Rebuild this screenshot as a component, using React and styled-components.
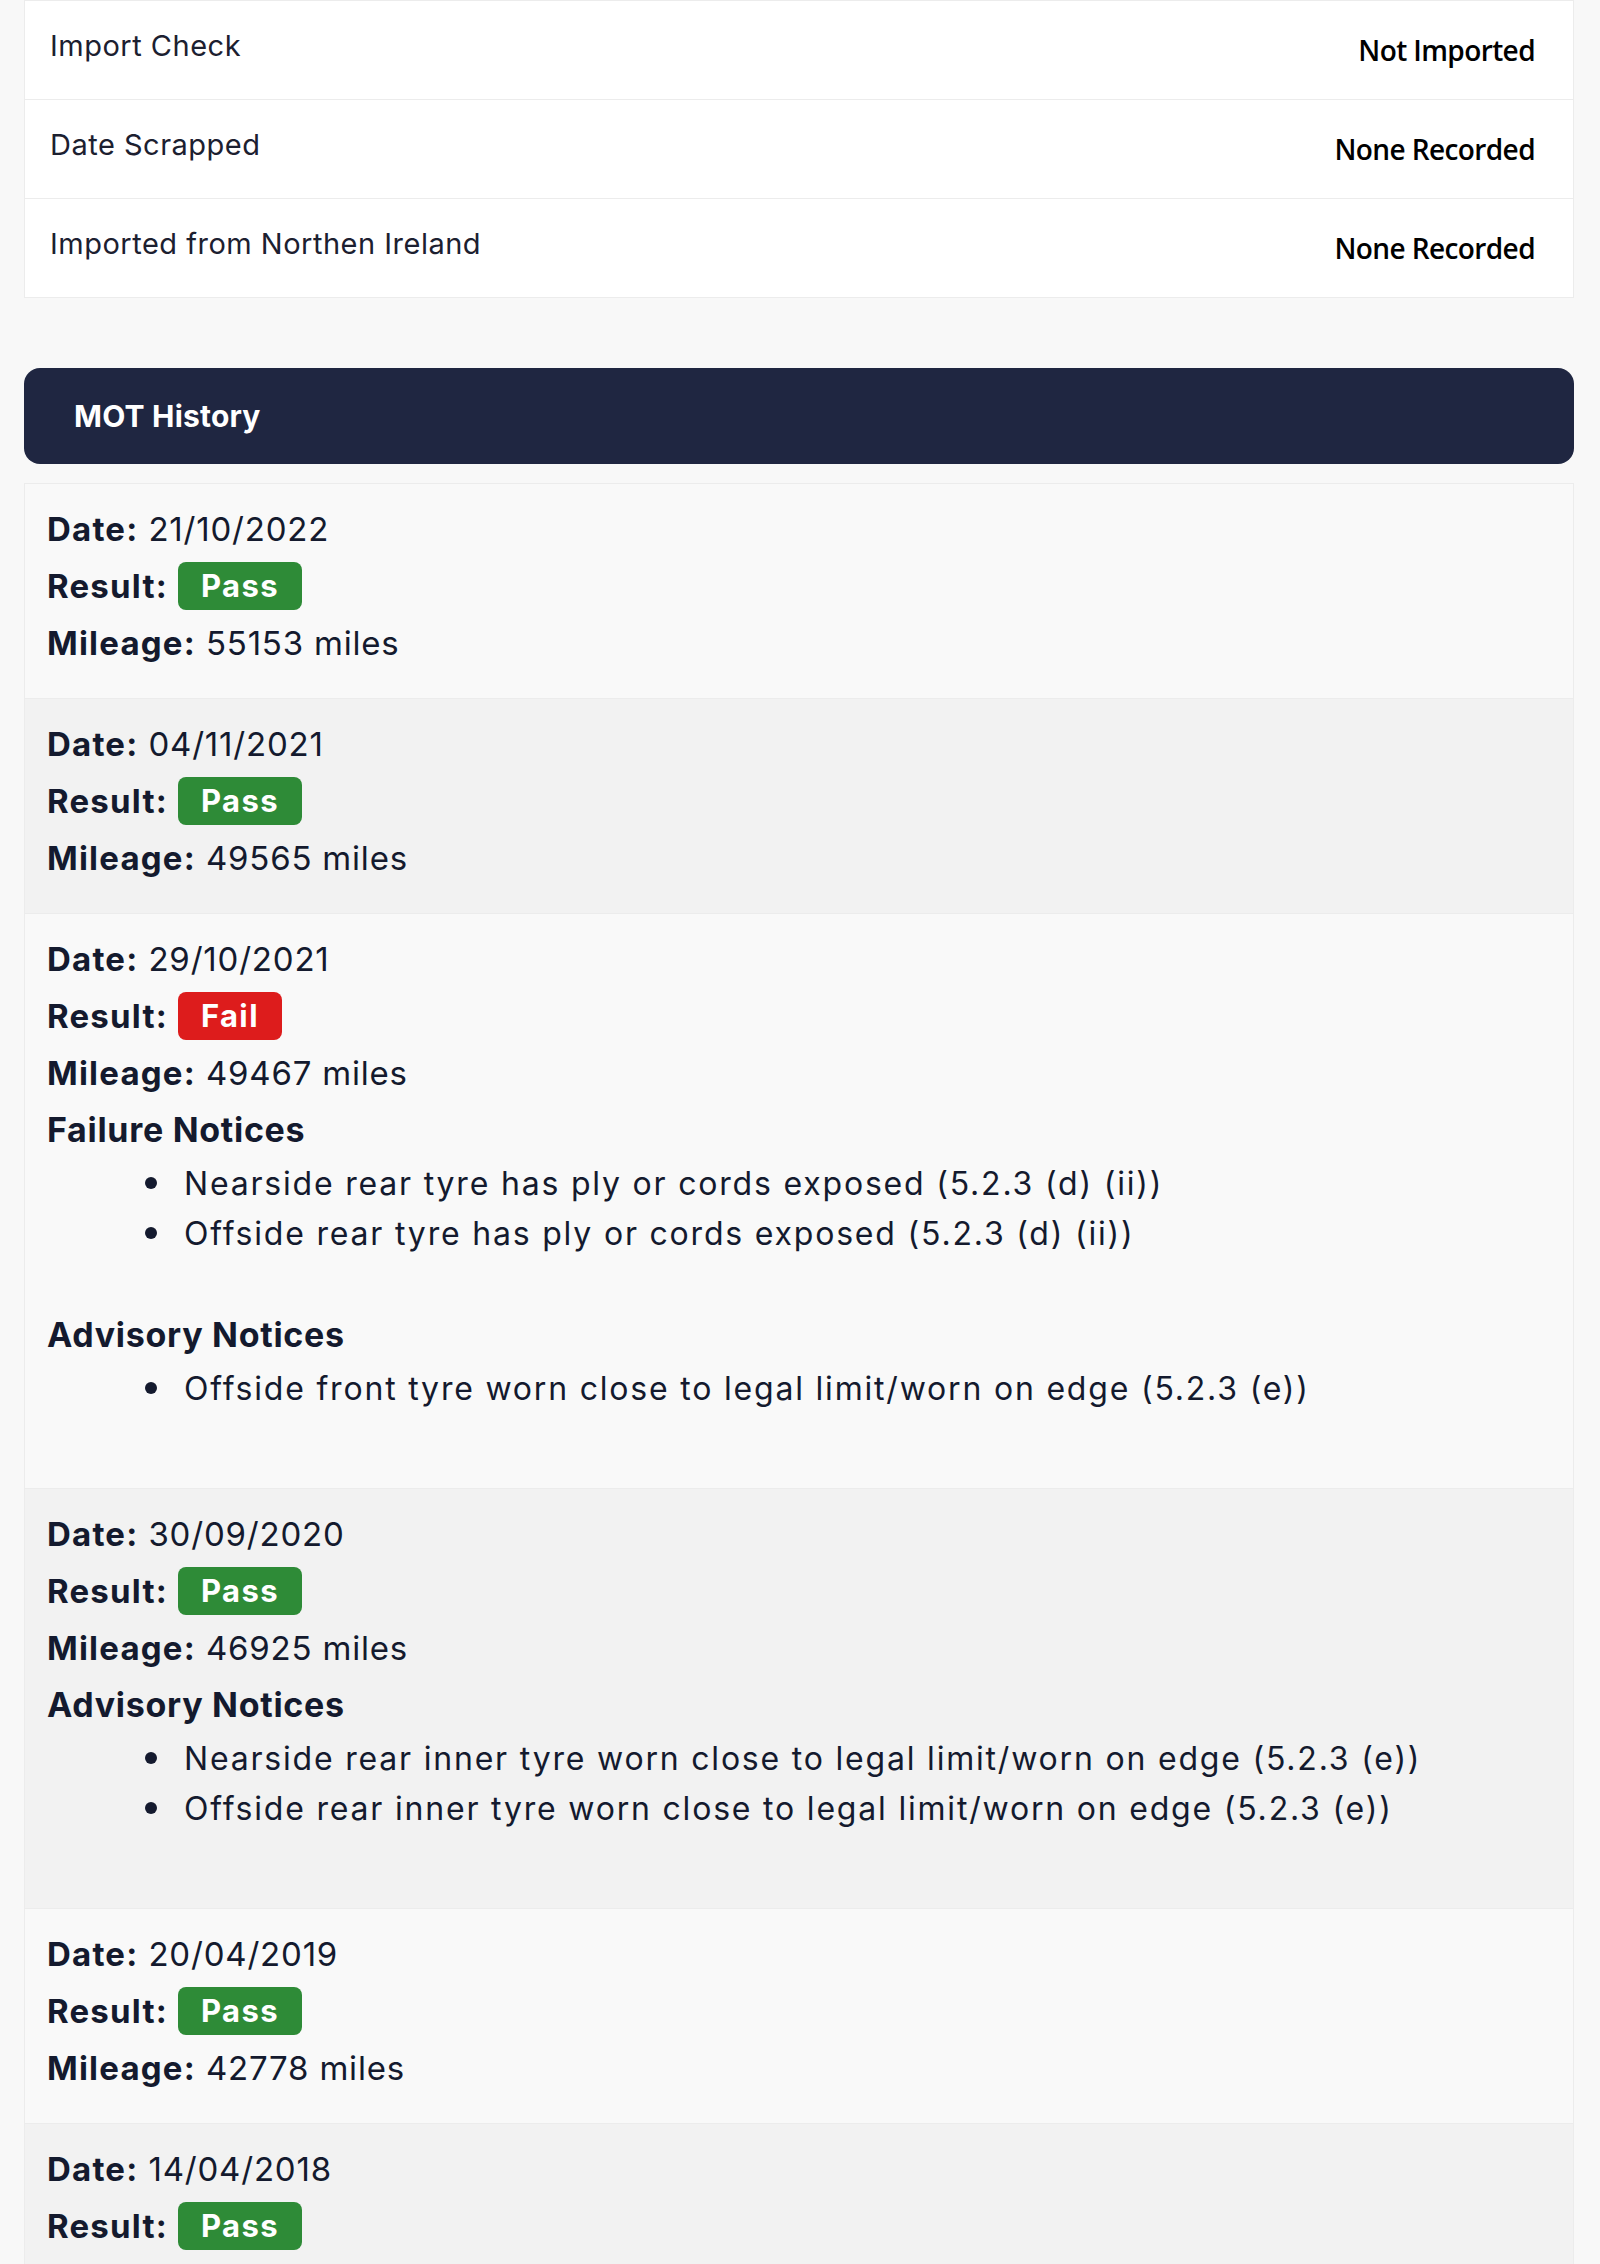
import React from "react";
import styled, { createGlobalStyle } from "styled-components";

const checks = [
  { label: "Import Check", value: "Not Imported" },
  { label: "Date Scrapped", value: "None Recorded" },
  { label: "Imported from Northen Ireland", value: "None Recorded" },
];

const tests = [
  { date: "21/10/2022", result: "Pass", mileage: 55153 },
  { date: "04/11/2021", result: "Pass", mileage: 49565 },
  {
    date: "29/10/2021",
    result: "Fail",
    mileage: 49467,
    failures: [
      "Nearside rear tyre has ply or cords exposed (5.2.3 (d) (ii))",
      "Offside rear tyre has ply or cords exposed (5.2.3 (d) (ii))",
    ],
    advisories: [
      "Offside front tyre worn close to legal limit/worn on edge (5.2.3 (e))",
    ],
  },
  {
    date: "30/09/2020",
    result: "Pass",
    mileage: 46925,
    advisories: [
      "Nearside rear inner tyre worn close to legal limit/worn on edge (5.2.3 (e))",
      "Offside rear inner tyre worn close to legal limit/worn on edge (5.2.3 (e))",
    ],
  },
  { date: "20/04/2019", result: "Pass", mileage: 42778 },
  { date: "14/04/2018", result: "Pass" },
];

const Notices = ({ title, items }) => (
  <>
    <Heading>{title}</Heading>
    <NoticeList>
      {items.map((item) => (
        <NoticeItem key={item}>
          <Dot />
          <span>{item}</span>
        </NoticeItem>
      ))}
    </NoticeList>
  </>
);

const App = () => {
  return (
    <Page>
      <GlobalStyle />
      <CheckCard>
        {checks.map((row) => (
          <CheckRow key={row.label}>
            <CheckLabel>{row.label}</CheckLabel>
            <CheckValue>{row.value}</CheckValue>
          </CheckRow>
        ))}
      </CheckCard>

      <SectionHeader>MOT History</SectionHeader>

      <TestList>
        {tests.map((test, i) => (
          <TestEntry key={test.date} $shaded={i % 2 === 1}>
            <Line>
              <Label>Date:</Label> {test.date}
            </Line>
            <Line>
              <Label>Result:</Label>
              <Badge $fail={test.result === "Fail"}>{test.result}</Badge>
            </Line>
            {test.mileage ? (
              <Line>
                <Label>Mileage:</Label> {test.mileage} miles
              </Line>
            ) : null}
            {test.failures ? (
              <Notices title="Failure Notices" items={test.failures} />
            ) : null}
            {test.advisories ? (
              <Notices title="Advisory Notices" items={test.advisories} />
            ) : null}
          </TestEntry>
        ))}
      </TestList>
    </Page>
  );
};

export default App;

const GlobalStyle = createGlobalStyle`
  html, body {
    margin: 0;
    padding: 0;
    background: #f8f8f8;
  }
  body {
    font-family: Inter, "Open Sans", sans-serif;
    color: #141a2e;
  }
`;

const Page = styled.div`
  padding: 0 26px 0 24px;
`;

const CheckCard = styled.div`
  background: #fff;
  border: 1px solid #ececec;
`;

const CheckRow = styled.div`
  display: flex;
  justify-content: space-between;
  align-items: center;
  height: 98px;
  padding: 0 38px 0 25px;
  border-bottom: 1px solid #ececec;

  &:last-child {
    border-bottom: none;
  }
`;

const CheckLabel = styled.span`
  font-size: 29px;
  letter-spacing: 0.5px;
  color: #1c2030;
  margin-top: -10px;
`;

const CheckValue = styled.span`
  font-family: "Open Sans", sans-serif;
  font-size: 28px;
  font-weight: 600;
  color: #000;
  letter-spacing: -0.6px;
`;

const SectionHeader = styled.div`
  display: flex;
  align-items: center;
  height: 96px;
  margin-top: 70px;
  padding-left: 50px;
  background: #1f2641;
  border-radius: 16px;
  color: #fff;
  font-size: 30px;
  font-weight: 700;
  letter-spacing: 0.2px;
`;

const TestList = styled.div`
  margin-top: 19px;
  border: 1px solid #ececec;
  border-bottom: none;
`;

const TestEntry = styled.div`
  padding: 16px 22px 27px;
  background: ${({ $shaded }) => ($shaded ? "#f2f2f2" : "#f9f9f9")};
  border-bottom: 1px solid #ececec;
`;

const Line = styled.div`
  display: flex;
  align-items: center;
  gap: 10px;
  height: 57px;
  font-size: 33px;
  letter-spacing: 0.8px;
  white-space: pre;
`;

const Label = styled.span`
  font-weight: 700;
  letter-spacing: 1.2px;
`;

const Badge = styled.span`
  display: inline-flex;
  align-items: center;
  height: 48px;
  padding: 0 23px;
  border-radius: 8px;
  background: ${({ $fail }) => ($fail ? "#dd1c1c" : "#2e8b37")};
  color: #fff;
  font-size: 31px;
  font-weight: 700;
  letter-spacing: 1.4px;
`;

const Heading = styled.div`
  display: flex;
  align-items: center;
  height: 57px;
  font-size: 34px;
  font-weight: 700;
  letter-spacing: 0.7px;
`;

const NoticeList = styled.ul`
  list-style: none;
  margin: 0 0 48px;
  padding: 0 0 0 98px;
`;

const NoticeItem = styled.li`
  display: flex;
  align-items: center;
  gap: 27px;
  height: 50px;
  font-size: 32px;
  letter-spacing: 1.8px;
`;

const Dot = styled.span`
  flex: none;
  width: 12px;
  height: 12px;
  border-radius: 50%;
  background: #141a2e;
`;
